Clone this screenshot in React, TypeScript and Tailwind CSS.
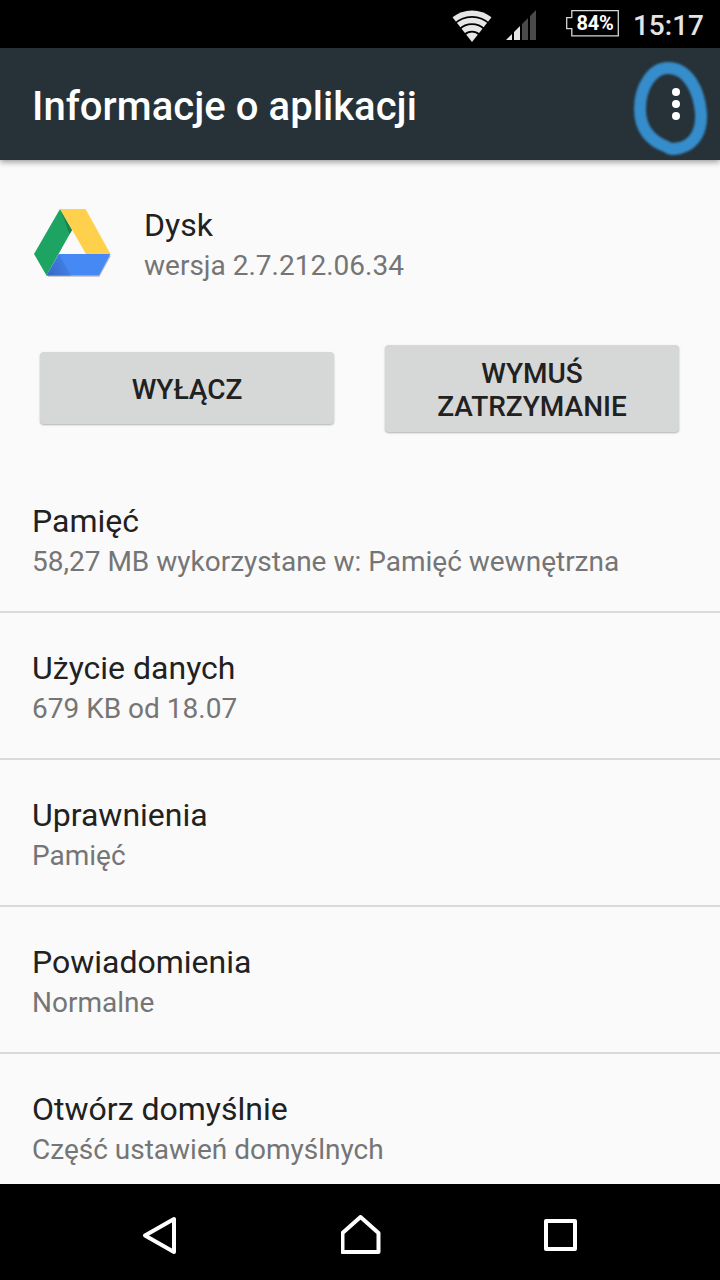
type InfoItem = {
  title: string;
  summary: string;
};

const items: InfoItem[] = [
  { title: 'Pamięć', summary: '58,27 MB wykorzystane w: Pamięć wewnętrzna' },
  { title: 'Użycie danych', summary: '679 KB od 18.07' },
  { title: 'Uprawnienia', summary: 'Pamięć' },
  { title: 'Powiadomienia', summary: 'Normalne' },
  { title: 'Otwórz domyślnie', summary: 'Część ustawień domyślnych' },
];

const WifiIcon = () => (
  <svg className="h-8 w-10" viewBox="0 0 40 32" fill="none">
    <path d="M20 32 L.5 7.3 A31.700 31.700 0 0 1 39.500 7.300 Z" fill="#e6e6e6" />
    <g stroke="#000" strokeWidth="1.7">
      <circle cx="20" cy="32" r="25.200" />
      <circle cx="20" cy="32" r="17.800" />
      <circle cx="20" cy="32" r="10.400" />
    </g>
  </svg>
);

const SignalIcon = () => (
  <svg className="h-[30px] w-[30px]" viewBox="0 0 30 30">
    <path d="M0 30 L6 24 V30 Z M8 22 L14 16 V30 H8 Z" fill="#e6e6e6" />
    <path d="M16 14 L22 8 V30 H16 Z M24 6 L30 0 V30 H24 Z" fill="#4a4a4a" />
  </svg>
);

const StatusBar = () => (
  <div className="flex h-12 shrink-0 items-start justify-end bg-black pr-4">
    <div className="mt-2.5 mr-[14px]">
      <WifiIcon />
    </div>
    <div className="mt-2.5 mr-[30px]">
      <SignalIcon />
    </div>
    <div className="relative mt-2.5 mr-[14px] h-[27px] w-[53px]">
      <svg className="absolute inset-0" width="53" height="27" viewBox="0 0 53 27" fill="none">
        <path d="M5.8 .7 H52.3 V25.8 H5.8 V18.7 H.7 V7.7 H5.8 Z" stroke="#d6d6d6" strokeWidth="1.3" />
      </svg>
      <span className="relative block pl-[5px] text-center text-[20px] leading-[27px] font-bold tracking-[-0.3px] text-white">
        84%
      </span>
    </div>
    <span className="mt-[10px] text-[28px] leading-8 font-medium text-[#e4e4e4]">15:17</span>
  </div>
);

const Toolbar = () => (
  <header className="relative z-10 flex h-28 shrink-0 items-center justify-between bg-[#263238] pr-[40px] pl-8 shadow-[0_2px_6px_rgba(0,0,0,0.4)]">
    <h1 className="pt-1.5 text-[40px] leading-[48px] font-medium tracking-[0.05px] text-white">
      Informacje o aplikacji
    </h1>
    <button className="flex flex-col gap-1" aria-label="Więcej opcji">
      <span className="size-2 rounded-full bg-white" />
      <span className="size-2 rounded-full bg-white" />
      <span className="size-2 rounded-full bg-white" />
    </button>
    {/* hand-drawn marker around the menu */}
    <svg
      className="pointer-events-none absolute top-2 right-0 h-[104px] w-[100px] blur-[1.3px]"
      viewBox="0 0 100 104"
      fill="none"
    >
      <path
        d="M48 12 C32 12 20 31 20 53 C20 73 31 85 47 91 C51 94 53 93 60 92 C76 88 82 73 81 57 C79 34 68 12 48 12 Z"
        stroke="#368dcb"
        strokeWidth="12"
        strokeLinejoin="round"
      />
    </svg>
  </header>
);

const DriveIcon = () => (
  <svg className="h-[70px] w-[78px]" viewBox="0 0 78 70">
    <defs>
      <linearGradient id="greenFold" x1="0" y1="0" x2="1" y2="1">
        <stop offset="0" stopColor="#1b9358" />
        <stop offset="1" stopColor="#177f4b" />
      </linearGradient>
      <linearGradient id="blueFold" x1="0" y1="1" x2="1" y2="0.6">
        <stop offset="0" stopColor="#3767c2" />
        <stop offset="1" stopColor="#4382ea" />
      </linearGradient>
    </defs>
    <path d="M14 68 H65 L76 48" fill="none" stroke="#000" strokeOpacity=".25" strokeWidth="1.5" />
    <path d="M26 1 L38 22 L12.500 67.500 L0 46 Z" fill="#1da362" />
    <path d="M26 1 L38 22 L35.500 26 Z" fill="url(#greenFold)" />
    <path d="M26 1 H51.500 L76.500 46 H52 Z" fill="#ffd04b" />
    <path d="M25 46 H76.500 L65 67.500 H12.500 Z" fill="#4688f4" />
    <path d="M25 46 L37 67.500 H12.500 Z" fill="url(#blueFold)" />
  </svg>
);

const AppHeader = () => (
  <section className="flex h-[176px] shrink-0 items-start pt-12 pl-[34px]">
    <DriveIcon />
    <div className="ml-8">
      <h2 className="mt-[-3px] text-[32px] leading-10 text-[#212121]">Dysk</h2>
      <p className="text-[28px] leading-[42px] text-[#757575]">wersja 2.7.212.06.34</p>
    </div>
  </section>
);

const actionClassName =
  'w-[294px] rounded-[4px] bg-[#d6d7d7] text-center text-[28px] leading-[33px] font-medium text-[#212121] shadow-[0_1px_2px_rgba(0,0,0,0.3)]';

const Actions = () => (
  <section className="flex h-[104px] shrink-0 items-center justify-between pr-[41px] pl-10">
    <button className={`${actionClassName} h-[72px] pt-[2px]`}>WYŁĄCZ</button>
    <button className={`${actionClassName} h-[87px] pt-[3px]`}>
      WYMUŚ
      <br />
      ZATRZYMANIE
    </button>
  </section>
);

const InfoRow = ({ title, summary }: InfoItem) => (
  <li className="h-[147px] shrink-0 border-b-2 border-[#dadada] px-8 pt-[35px]">
    <h3 className="text-[32px] leading-10 text-[#212121]">{title}</h3>
    <p className="text-[28px] leading-[42px] text-[#757575]">{summary}</p>
  </li>
);

const NavigationBar = () => (
  <nav className="flex h-24 shrink-0 items-center justify-between bg-black px-[142px] pt-[6px]">
    <svg className="h-10 w-9" viewBox="0 0 36 40" fill="none">
      <path d="M3 20.500 L32 4 V37 Z" stroke="#fff" strokeWidth="4" strokeLinejoin="round" />
    </svg>
    <svg className="h-10 w-10" viewBox="0 0 40 40" fill="none">
      <path d="M1.500 18 L19.500 2 L37.500 18 V37 H1.500 Z" stroke="#fff" strokeWidth="4" strokeLinejoin="round" />
    </svg>
    <svg className="h-8 w-[34px]" viewBox="0 0 34 32" fill="none">
      <rect x="2" y="2" width="29" height="28" stroke="#fff" strokeWidth="4" strokeLinejoin="round" />
    </svg>
  </nav>
);

export default function App() {
  return (
    <div className="flex h-[1280px] w-[720px] flex-col overflow-hidden bg-[#fafafa] font-[Roboto,sans-serif]">
      <StatusBar />
      <Toolbar />
      <main className="flex min-h-0 flex-1 flex-col overflow-hidden">
        <AppHeader />
        <Actions />
        <ul className="mt-[26px] flex flex-col">
          {items.map((item) => (
            <InfoRow key={item.title} {...item} />
          ))}
        </ul>
      </main>
      <NavigationBar />
    </div>
  );
}
